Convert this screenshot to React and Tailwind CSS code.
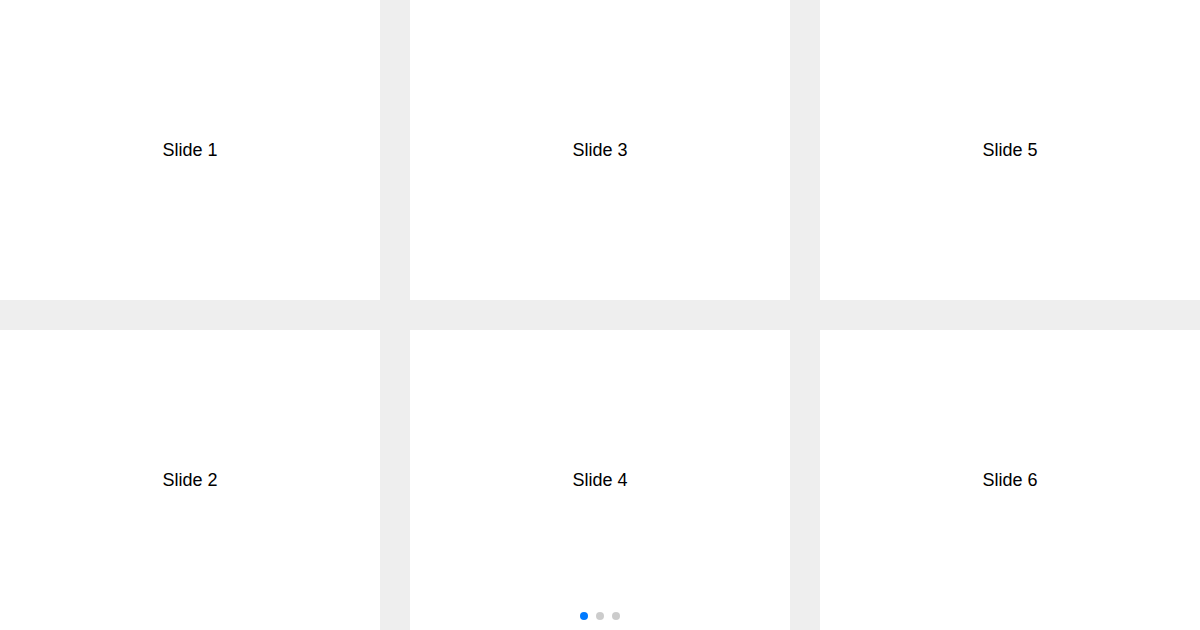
import React from "react";

const slides = [1, 2, 3, 4, 5, 6];

export default function App() {
  return (
    <div className="relative w-[1200px] h-[630px] overflow-hidden bg-[#eeeeee] font-['Liberation_Sans',Helvetica,Arial,sans-serif]">
      <div className="grid grid-cols-3 grid-rows-2 grid-flow-col gap-[30px] h-full">
        {slides.map((n) => (
          <div key={n} className="flex items-center justify-center bg-white text-[18px] text-black">
            Slide {n}
          </div>
        ))}
      </div>
      {/* Pagination */}
      <div className="absolute left-0 right-0 bottom-[10px] flex justify-center gap-2">
        <span className="w-2 h-2 rounded-full bg-[#007aff]"></span>
        <span className="w-2 h-2 rounded-full bg-black opacity-20"></span>
        <span className="w-2 h-2 rounded-full bg-black opacity-20"></span>
      </div>
    </div>
  );
}
